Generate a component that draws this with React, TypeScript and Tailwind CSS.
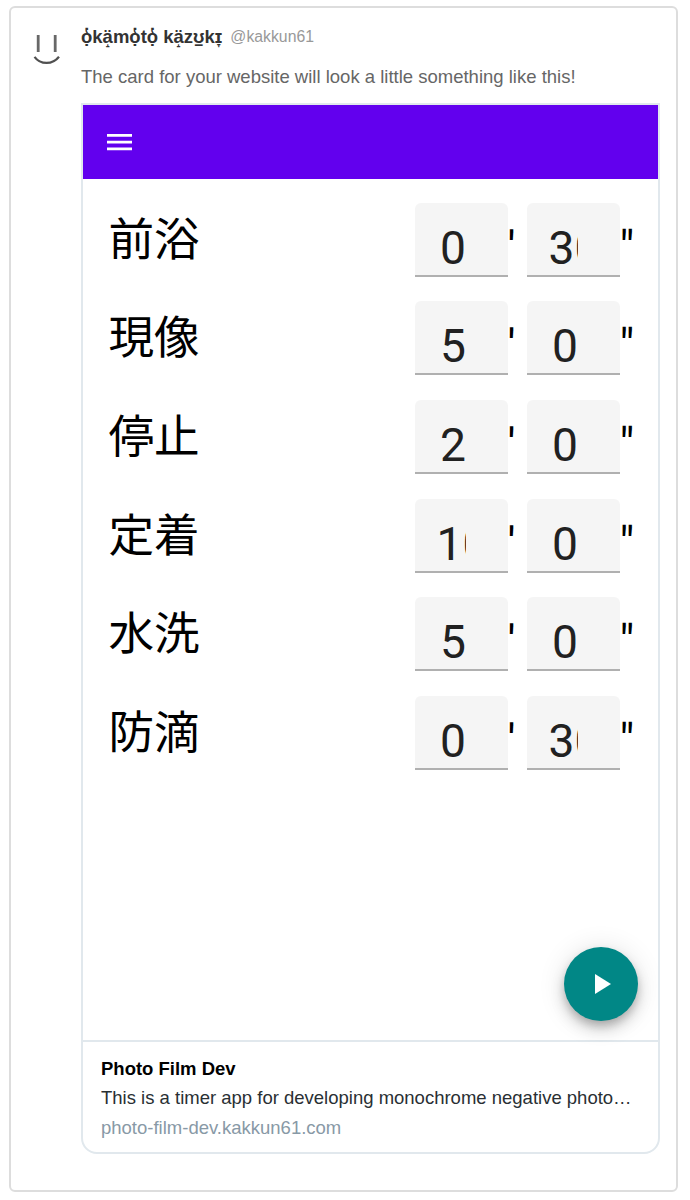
type Step = {
  label: string;
  minutes: string;
  seconds: string;
};

const steps: Step[] = [
  { label: "前浴", minutes: "0", seconds: "30" },
  { label: "現像", minutes: "5", seconds: "0" },
  { label: "停止", minutes: "2", seconds: "0" },
  { label: "定着", minutes: "10", seconds: "0" },
  { label: "水洗", minutes: "5", seconds: "0" },
  { label: "防滴", minutes: "0", seconds: "30" },
];

function Avatar() {
  return (
    <svg viewBox="0 0 40 50" className="h-[50px] w-10 shrink-0 blur-[0.7px]" fill="none">
      <path d="M12.2 10v17M29.2 10v17" strokeWidth="2.8" stroke="#686868" />
      <path d="M8.5 31.8c6 8.2 18 8.2 24.5 0" strokeWidth="2.2" stroke="#505050" />
    </svg>
  );
}

function TimeField({ value }: { value: string }) {
  return (
    <div className="h-[74px] w-[92.5px] rounded-t-[6px] border-b-2 border-[#b0b0b0] bg-[#f5f5f5] pt-[18px] pl-[20px]">
      <div className="w-[31px] overflow-hidden">
        <span className={value.length > 1 ? "ml-[1.6px] block text-[#212121]" : "ml-[5px] block text-[#212121]"}>
          {value}
        </span>
      </div>
    </div>
  );
}

function StepRow({ label, minutes, seconds }: Step) {
  return (
    <div className="flex h-[74px] w-full text-[46.2px] leading-[54px] text-black">
      <span className="flex-1 pt-[11px] pl-[0.5px] text-[45.6px]">{label}</span>
      <TimeField value={minutes} />
      <span className="w-[19.5px] pt-[18px]">'</span>
      <TimeField value={seconds} />
      <span className="w-[19.5px] pt-[18px]">"</span>
    </div>
  );
}

function TimerPreview() {
  return (
    <div className="flex h-[937px] flex-col border-b-2 border-[#e1e8ed] font-[Roboto,'Noto_Sans_CJK_JP',sans-serif]">
      <div className="flex h-[74px] shrink-0 items-center bg-[#6200ee] pl-[24.4px]">
        <svg viewBox="0 0 25 17" className="h-[17px] w-[25px]" fill="white">
          <path d="M0 0h25v2.8H0zM0 6.7h25v2.8H0zM0 13.4h25v2.8H0z" />
        </svg>
      </div>
      <div className="flex flex-1 flex-col gap-[24.67px] pt-[23.7px] pr-[19px] pl-[25px]">
        {steps.map((step) => (
          <StepRow key={step.label} {...step} />
        ))}
      </div>
      <div className="mr-5 mb-[19px] flex size-[74px] shrink-0 items-center justify-center self-end rounded-full bg-[#018786] shadow-[0_5px_8px_-1px_rgba(0,0,0,0.2),0_9px_15px_rgba(0,0,0,0.14),0_2px_28px_rgba(0,0,0,0.12)]">
        <svg viewBox="0 0 16 20" className="ml-[3px] h-5 w-4" fill="white">
          <path d="M0 0v20l16-10z" />
        </svg>
      </div>
    </div>
  );
}

export default function App() {
  return (
    <div className="h-[1200px] w-[690px] bg-white pt-[6px] pl-[9px] font-['Liberation_Sans',Arial,sans-serif]">
      <div className="flex h-[1186px] w-[669px] rounded-[6px] border-2 border-[#dddddd] pt-[17px] pl-[15px]">
        <Avatar />
        <div className="ml-[15px] w-[579px]">
          <div className="flex h-6 items-center gap-2">
            <span className="text-[18.5px] font-bold text-[#333333]">ọ̔kä̝mọ̔tọ̔ kä̝zʊ̠kɪ̞</span>
            <span className="text-[15.8px] text-[#999999]">@kakkun61</span>
          </div>
          <p className="mt-4 text-[18.5px] leading-6 text-[#666666]">
            The card for your website will look a little something like this!
          </p>
          <div className="mt-[14px] h-[1051px] overflow-hidden rounded-b-[16px] border-2 border-[#e1e8ed]">
            <TimerPreview />
            <div className="px-[18px] pt-3 text-[18.5px]">
              <p className="leading-[29px] font-bold text-black">Photo Film Dev</p>
              <p className="truncate leading-[29px] text-[#292f33]">
                This is a timer app for developing monochrome negative photo…
              </p>
              <p className="leading-[31px] text-[#8899a6]">photo-film-dev.kakkun61.com</p>
            </div>
          </div>
        </div>
      </div>
    </div>
  );
}
